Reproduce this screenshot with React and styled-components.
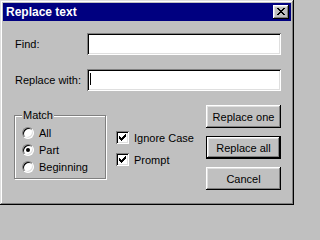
import React from 'react';
import styled, { createGlobalStyle, css } from 'styled-components';

const GlobalStyle = createGlobalStyle`
  html, body {
    margin: 0;
    padding: 0;
    background: #c0c0c0;
  }
  body {
    font-family: 'Liberation Sans', Arial, sans-serif;
    font-size: 11px;
    color: #000;
  }
`;

const raised = css`
  box-shadow:
    inset -1px -1px 0 #000,
    inset 1px 1px 0 #fff,
    inset -2px -2px 0 #808080,
    inset 2px 2px 0 #dfdfdf;
`;

const sunken = css`
  box-shadow:
    inset 1px 1px 0 #808080,
    inset -1px -1px 0 #fff,
    inset 2px 2px 0 #000,
    inset -2px -2px 0 #dfdfdf;
`;

const Window = styled.div`
  width: 294px;
  height: 205px;
  box-sizing: border-box;
  padding: 3px;
  background: #c0c0c0;
  box-shadow:
    inset -1px -1px 0 #000,
    inset 1px 1px 0 #dfdfdf,
    inset -2px -2px 0 #808080,
    inset 2px 2px 0 #fff;
  display: flex;
  flex-direction: column;
`;

const TitleBar = styled.div`
  height: 18px;
  background: #000080;
  color: #fff;
  display: flex;
  align-items: center;
  justify-content: space-between;
  padding: 0 2px 0 3px;
`;

const Title = styled.span`
  font-weight: bold;
  font-size: 12px;
  line-height: 18px;
`;

const CloseButton = styled.button`
  width: 16px;
  height: 14px;
  padding: 0;
  border: 0;
  background: #c0c0c0;
  ${raised};
  display: flex;
  align-items: center;
  justify-content: center;
  svg {
    display: block;
    margin: 0 1px 1px 0;
  }
`;

const Body = styled.div`
  padding: 12px 10px 0 12px;
  display: flex;
  flex-direction: column;
`;

const Fields = styled.div`
  display: grid;
  grid-template-columns: 72px 1fr;
  row-gap: 14px;
  align-items: center;
`;

const Label = styled.label`
  white-space: nowrap;
`;

const TextField = styled.div`
  height: 22px;
  box-sizing: border-box;
  background: #fff;
  ${sunken};
  padding: 4px 0 0 3px;
`;

const Caret = styled.span`
  display: block;
  width: 1px;
  height: 12px;
  background: #000;
`;

const Lower = styled.div`
  display: flex;
  align-items: flex-start;
  margin-top: 14px;
`;

const GroupBox = styled.fieldset`
  margin: 4px 0 0 -1px;
  width: 92px;
  box-sizing: border-box;
  padding: 3px 4px 3px 7px;
  border: 1px solid #808080;
  box-shadow: 1px 1px 0 #fff, inset 1px 1px 0 #fff;
  display: flex;
  flex-direction: column;
`;

const Legend = styled.legend`
  padding: 0 1px;
  line-height: 12px;
  background: #c0c0c0;
`;

const OptionRow = styled.label`
  display: flex;
  align-items: center;
  gap: 5px;
  height: 17px;
  white-space: nowrap;
`;

const Radio = styled.span`
  position: relative;
  width: 12px;
  height: 12px;
  box-sizing: border-box;
  border-radius: 50%;
  background: #fff;
  border: 1px solid;
  border-color: #808080 #fff #fff #808080;
  box-shadow: inset 1px 1px 0 #000, inset -1px -1px 0 #dfdfdf;
  flex: none;
  &::after {
    content: '';
    display: ${(p) => (p.checked ? 'block' : 'none')};
    position: absolute;
    left: 3px;
    top: 3px;
    width: 4px;
    height: 4px;
    border-radius: 50%;
    background: #000;
  }
`;

const Checks = styled.div`
  display: flex;
  flex-direction: column;
  gap: 9px;
  margin: 26px 0 0 10px;
`;

const CheckRow = styled.label`
  display: flex;
  align-items: center;
  gap: 5px;
  height: 13px;
  white-space: nowrap;
`;

const CheckBox = styled.span`
  width: 13px;
  height: 13px;
  box-sizing: border-box;
  background: #fff;
  ${sunken};
  flex: none;
  svg {
    display: block;
  }
`;

const Buttons = styled.div`
  margin-left: auto;
  display: flex;
  flex-direction: column;
  gap: 8px;
`;

const Button = styled.button`
  width: 75px;
  height: 23px;
  padding: 0;
  background: #c0c0c0;
  font-family: 'Liberation Sans', Arial, sans-serif;
  font-size: 11px;
  color: #000;
  border: ${(p) => (p.$default ? '1px solid #000' : '0')};
  ${raised};
`;

const CloseIcon = () => (
  <svg width="8" height="7" viewBox="0 0 8 7" shapeRendering="crispEdges">
    <path
      fill="#000"
      d="M0 0h2v1H0zM6 0h2v1H6zM1 1h2v1H1zM5 1h2v1H5zM2 2h4v1H2zM3 3h2v1H3zM2 4h4v1H2zM1 5h2v1H1zM5 5h2v1H5zM0 6h2v1H0zM6 6h2v1H6z"
    />
  </svg>
);

const CheckMark = () => (
  <svg width="13" height="13" viewBox="0 0 13 13" shapeRendering="crispEdges">
    <path
      fill="#000"
      d="M9 3h1v1H9zM8 4h2v1H8zM3 5h1v1H3zM7 5h3v1H7zM3 6h2v1H3zM6 6h3v1H6zM3 7h5v1H3zM4 8h3v1H4zM5 9h1v1H5z"
    />
  </svg>
);

const matchOptions = [
  { label: 'All', checked: false },
  { label: 'Part', checked: true },
  { label: 'Beginning', checked: false },
];

const App = () => (
  <>
    <GlobalStyle />
    <Window>
      <TitleBar>
        <Title>Replace text</Title>
        <CloseButton aria-label="Close">
          <CloseIcon />
        </CloseButton>
      </TitleBar>
      <Body>
        <Fields>
          <Label>Find:</Label>
          <TextField />
          <Label>Replace with:</Label>
          <TextField>
            <Caret />
          </TextField>
        </Fields>
        <Lower>
          <GroupBox>
            <Legend>Match</Legend>
            {matchOptions.map((opt) => (
              <OptionRow key={opt.label}>
                <Radio checked={opt.checked} />
                {opt.label}
              </OptionRow>
            ))}
          </GroupBox>
          <Checks>
            <CheckRow>
              <CheckBox>
                <CheckMark />
              </CheckBox>
              Ignore Case
            </CheckRow>
            <CheckRow>
              <CheckBox>
                <CheckMark />
              </CheckBox>
              Prompt
            </CheckRow>
          </Checks>
          <Buttons>
            <Button>Replace one</Button>
            <Button $default>Replace all</Button>
            <Button>Cancel</Button>
          </Buttons>
        </Lower>
      </Body>
    </Window>
  </>
);

export default App;
